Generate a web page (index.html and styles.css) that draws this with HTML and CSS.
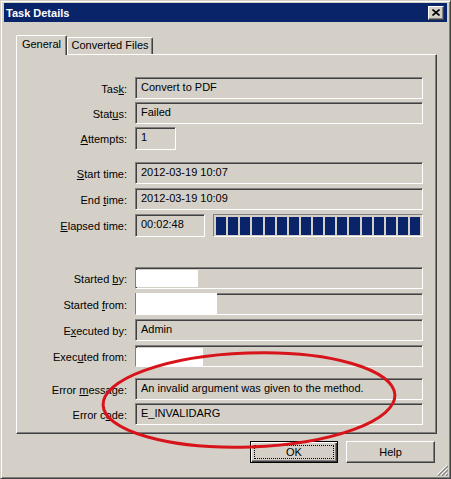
FILE: index.html
```html
<!DOCTYPE html>
<html>

<head>
    <link rel="stylesheet" href="styles.css">
</head>

<body>
    <div class="window">
        <div class="title_bar">
            <p class="title">Task Details</p>
            <div class="close">
                <svg width="8" height="7" viewBox="0 0 8 7">
                    <path d="M0.5 0.5 L7.5 6.5 M7.5 0.5 L0.5 6.5" stroke="#000" stroke-width="1.6" fill="none" />
                </svg>
            </div>
        </div>
        <div class="tabs">
            <div class="tab tab_on">General</div>
            <div class="tab">Converted Files</div>
        </div>
        <div class="panel">
            <div class="group">
                <div class="row">
                    <p class="label">Tas<u>k</u>:</p>
                    <div class="field">Convert to PDF</div>
                </div>
                <div class="row">
                    <p class="label">Stat<u>u</u>s:</p>
                    <div class="field">Failed</div>
                </div>
                <div class="row">
                    <p class="label"><u>A</u>ttempts:</p>
                    <div class="field field_small">1</div>
                </div>
            </div>
            <div class="group group_times">
                <div class="row">
                    <p class="label"><u>S</u>tart time:</p>
                    <div class="field">2012-03-19 10:07</div>
                </div>
                <div class="row">
                    <p class="label">End <u>t</u>ime:</p>
                    <div class="field">2012-03-19 10:09</div>
                </div>
                <div class="row">
                    <p class="label"><u>E</u>lapsed time:</p>
                    <div class="field field_elapsed">00:02:48</div>
                    <div class="progress">
                        <span></span><span></span><span></span><span></span><span></span><span></span>
                        <span></span><span></span><span></span><span></span><span></span><span></span>
                        <span></span><span></span><span></span><span></span><span></span>
                    </div>
                </div>
            </div>
            <div class="group group_who">
                <div class="row">
                    <p class="label">Started <u>b</u>y:</p>
                    <div class="field"><span class="hide hide_by"></span></div>
                </div>
                <div class="row">
                    <p class="label">Started <u>f</u>rom:</p>
                    <div class="field"><span class="hide hide_from"></span></div>
                </div>
                <div class="row">
                    <p class="label">E<u>x</u>ecuted by:</p>
                    <div class="field">Admin</div>
                </div>
                <div class="row">
                    <p class="label">Exec<u>u</u>ted from:</p>
                    <div class="field"><span class="hide hide_exec"></span></div>
                </div>
            </div>
            <div class="group group_error">
                <div class="row">
                    <p class="label">Error <u>m</u>essage:</p>
                    <div class="field">An invalid argument was given to the method.</div>
                </div>
                <div class="row">
                    <p class="label">Error c<u>o</u>de:</p>
                    <div class="field">E_INVALIDARG</div>
                </div>
            </div>
        </div>
        <div class="buttons">
            <div class="btn btn_default"><span class="focus">OK</span></div>
            <div class="btn">Help</div>
        </div>
        <svg class="grip" width="12" height="12" viewBox="0 0 12 12">
            <path d="M11 1 L1 11 M11 5 L5 11 M11 9 L9 11" stroke="#fff" stroke-width="1" fill="none" />
            <path d="M12 2 L2 12 M12 6 L6 12 M12 10 L10 12" stroke="#808080" stroke-width="1.2" fill="none" />
        </svg>
        <!-- red marker circle drawn over the dialog -->
        <svg class="marker" width="451" height="479" viewBox="0 0 451 479">
            <ellipse cx="249" cy="400" rx="146" ry="47" transform="rotate(-2 249 400)" stroke="#d8141b"
                stroke-width="3" fill="none" />
        </svg>
    </div>
</body>

</html>
```

FILE: styles.css
```css
body {
    margin: 0;
    font-family: "Liberation Sans", Arial, sans-serif;
    font-size: 11px;
    color: black;
}

p {
    margin: 0;
}

.window {
    position: relative;
    box-sizing: border-box;
    width: 451px;
    height: 479px;
    padding: 2px 3px;
    background-color: #D4D0C8;
    border: 1px solid;
    border-color: #D4D0C8 #404040 #404040 #D4D0C8;
    box-shadow: inset 1px 1px 0 #fff, inset -1px -1px 0 #808080;
    overflow: hidden;
}

.title_bar {
    height: 19px;
    background-color: #0A246A;
    display: flex;
    justify-content: space-between;
    align-items: center;
    padding: 0 3px 0 2px;
}

.title {
    color: white;
    font-weight: bold;
    font-size: 11px;
}

.close {
    box-sizing: border-box;
    width: 16px;
    height: 14px;
    background-color: #D4D0C8;
    border: 1px solid;
    border-color: #fff #404040 #404040 #fff;
    box-shadow: inset -1px -1px 0 #808080;
    display: flex;
    justify-content: center;
    align-items: center;
}

.tabs {
    display: flex;
    align-items: flex-end;
    height: 19px;
    margin: 13px 0 0 12px;
}

.tab {
    box-sizing: border-box;
    width: 86px;
    height: 17px;
    line-height: 15px;
    text-align: center;
    border: 1px solid;
    border-bottom: none;
    border-color: #fff #404040 #fff #fff;
    box-shadow: inset -1px 0 0 #808080;
    border-radius: 2px 2px 0 0;
}

.tab_on {
    position: relative;
    z-index: 1;
    width: 51px;
    height: 20px;
    line-height: 16px;
    margin-bottom: -1px;
    background-color: #D4D0C8;
}

.panel {
    box-sizing: border-box;
    width: 421px;
    margin-left: 12px;
    padding: 22px 13px 8px 0;
    border: 1px solid;
    border-color: #fff #404040 #404040 #fff;
    box-shadow: inset -1px -1px 0 #808080;
}

.group {
    display: flex;
    flex-direction: column;
    gap: 3px;
}

.group_times {
    margin-top: 13px;
    gap: 4px;
}

.group_who {
    margin-top: 31px;
    gap: 4px;
}

.group_error {
    margin-top: 11px;
}

.row {
    display: flex;
    align-items: center;
    height: 22px;
    gap: 8px;
}

.label {
    width: 110px;
    text-align: right;
    padding-top: 2px;
}

.field {
    position: relative;
    box-sizing: border-box;
    flex: 1;
    height: 22px;
    padding: 0 5px 1px 5px;
    line-height: 19px;
    border: 1px solid;
    border-color: #808080 #fff #fff #808080;
    box-shadow: inset 1px 1px 0 #404040;
    white-space: nowrap;
}

.field_small {
    flex: none;
    width: 41px;
    height: 23px;
}

.field_elapsed {
    flex: none;
    width: 70px;
    height: 23px;
}

.progress {
    box-sizing: border-box;
    width: 210px;
    height: 23px;
    display: flex;
    gap: 2px;
    padding: 2px 2px 1px 2px;
    border: 1px solid;
    border-color: #808080 #fff #fff #808080;
}

.progress span {
    flex: 1;
    background-color: #0A246A;
}

.hide {
    position: absolute;
    left: 0;
    background-color: white;
}

.hide_by {
    top: 2px;
    width: 62px;
    height: 17px;
}

.hide_from {
    top: -1px;
    width: 81px;
    height: 21px;
}

.hide_exec {
    top: 2px;
    width: 67px;
    bottom: -1px;
}

.buttons {
    display: flex;
    justify-content: flex-end;
    gap: 8px;
    margin: 7px 12px 0 0;
}

.btn {
    box-sizing: border-box;
    width: 89px;
    height: 22px;
    display: flex;
    justify-content: center;
    align-items: center;
    border: 1px solid;
    border-color: #fff #404040 #404040 #fff;
    box-shadow: inset -1px -1px 0 #808080;
}

.btn_default {
    width: 88px;
    border: 1px solid black;
    box-shadow: inset 1px 1px 0 #fff, inset -1px -1px 0 #404040, inset -2px -2px 0 #808080;
    padding: 3px;
}

.focus {
    box-sizing: border-box;
    width: 100%;
    height: 100%;
    border: 1px dotted black;
    text-align: center;
    line-height: 12px;
}

.grip {
    position: absolute;
    right: 2px;
    bottom: 2px;
}

.marker {
    position: absolute;
    left: -1px;
    top: -1px;
    pointer-events: none;
}
```
